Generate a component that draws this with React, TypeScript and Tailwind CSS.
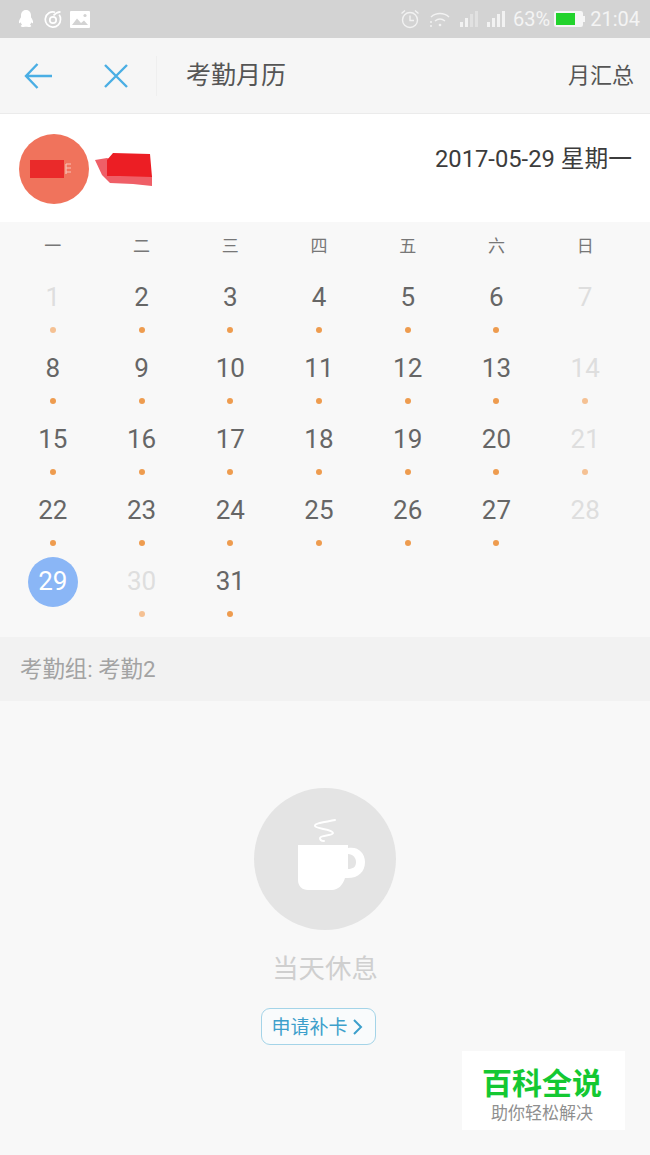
import React from "react";

const days: { n: number; off?: boolean; noDot?: boolean; sel?: boolean }[] = [
  { n: 1, off: true }, { n: 2 }, { n: 3 }, { n: 4 }, { n: 5 }, { n: 6 }, { n: 7, off: true, noDot: true },
  { n: 8 }, { n: 9 }, { n: 10 }, { n: 11 }, { n: 12 }, { n: 13 }, { n: 14, off: true },
  { n: 15 }, { n: 16 }, { n: 17 }, { n: 18 }, { n: 19 }, { n: 20 }, { n: 21, off: true },
  { n: 22 }, { n: 23 }, { n: 24 }, { n: 25 }, { n: 26 }, { n: 27 }, { n: 28, off: true, noDot: true },
  { n: 29, sel: true, noDot: true }, { n: 30, off: true }, { n: 31 },
];

function Bars({ dim }: { dim?: boolean }) {
  return (
    <svg width="21" height="16" viewBox="0 0 21 16" fill="#f2f2f2">
      <rect x="0" y="11" width="3" height="5" />
      <rect x="5" y="7" width="3" height="9" />
      <rect x="10" y="3" width="3" height="13" opacity={dim ? 0.45 : 1} />
      <rect x="15" y="0" width="3" height="16" opacity={dim ? 0.45 : 1} />
    </svg>
  );
}

export default function App() {
  return (
    <div className="w-[650px] h-[1155px] bg-[#f8f8f8] overflow-hidden relative font-['Roboto','Noto_Sans_CJK_SC',sans-serif]">
      {/* status bar */}
      <div className="h-[38px] bg-[#d3d3d3] flex items-center justify-between pl-[18px] pr-[10px] text-[#f4f4f4]">
        <div className="flex items-center">
          <svg width="16" height="18" viewBox="0 0 16 18" fill="#fff">
            <path d="M8 0C4.6 0 3 2.6 3 5.5v1.7C1.6 9.2.6 11 1 13c.3.6 1 .3 1.6-.7.3 1 .8 1.8 1.4 2.4-1 .5-1.4 1-1.2 1.6.3.9 2.7 1 4.1.5.6-.2 1.6-.2 2.2 0 1.4.5 3.8.4 4.1-.5.2-.6-.2-1.1-1.2-1.6.6-.6 1.1-1.4 1.4-2.4.6 1 1.3 1.3 1.6.7.4-2-.6-3.8-2-5.8V5.5C13 2.6 11.4 0 8 0z" />
          </svg>
          <svg width="18" height="18" viewBox="0 0 18 18" fill="none" stroke="#fff" strokeWidth="1.7" className="ml-[10px]">
            <path d="M11 2.2A7.6 7.6 0 1 0 16.5 9c0-1.6-.5-3-1.3-4.2" />
            <circle cx="9" cy="10" r="3.2" />
            <path d="M9.5 5.5C11 3.5 13.5 2 16.5 1.8" />
          </svg>
          <svg width="20" height="17" viewBox="0 0 20 17" className="ml-[8px]">
            <rect width="20" height="17" rx="1" fill="#fff" />
            <path d="M2 14 7 7.5l4 4.5 3-2.5 4 4.5z" fill="#d3d3d3" />
            <circle cx="15" cy="4.5" r="1.6" fill="#d3d3d3" />
          </svg>
        </div>
        <div className="flex items-center text-[20px] leading-none">
          <svg width="20" height="20" viewBox="0 0 20 20" fill="none" stroke="#f2f2f2" strokeWidth="1.4" className="mr-[9px]">
            <circle cx="10" cy="11" r="7.5" />
            <path d="M10 6.5V11.5H14M1.5 4.5 5 1.5M18.5 4.5 15 1.5" />
          </svg>
          <svg width="22" height="17" viewBox="0 0 22 17" fill="none" stroke="#f2f2f2" strokeWidth="1.4" className="mr-[9px]">
            <path d="M2 6c5-4.6 13-4.6 18 0M6 10c3-2.4 7-2.4 10 0" />
            <circle cx="11" cy="14" r="1.3" fill="#f2f2f2" stroke="none" />
            <circle cx="2" cy="11" r="1" fill="#f2f2f2" stroke="none" />
            <circle cx="2" cy="15" r="1" fill="#f2f2f2" stroke="none" />
          </svg>
          <Bars dim />
          <span className="w-[6px]" />
          <Bars />
          <span className="ml-[5px] mr-[4px] text-[20px]">63%</span>
          <svg width="31" height="16" viewBox="0 0 31 16" className="mr-[5px]">
            <rect x="0.75" y="0.75" width="27.5" height="14.5" rx="1.5" fill="#f6f6f6" stroke="#f6f6f6" strokeWidth="1.5" />
            <rect x="2" y="2" width="19" height="12" fill="#22d32c" />
            <rect x="29" y="5" width="2" height="6" fill="#f6f6f6" />
          </svg>
          <span className="text-[20px]">21:04</span>
        </div>
      </div>

      {/* header */}
      <div className="h-[76px] bg-[#f6f6f6] border-b border-[#ebebeb] flex items-center">
        <svg width="30" height="28" viewBox="0 0 30 28" fill="none" stroke="#4aaee4" strokeWidth="2.4" className="ml-[24px]">
          <path d="M28 14H2M13.5 2 2 14l11.5 12" />
        </svg>
        <svg width="26" height="26" viewBox="0 0 26 26" fill="none" stroke="#4aaee4" strokeWidth="2.4" className="ml-[49px]">
          <path d="M2 2l22 22M24 2 2 24" />
        </svg>
        <div className="w-px h-[40px] bg-[#efefef] ml-[27px]" />
        <div className="ml-[29px] text-[25px] text-[#555]">考勤月历</div>
        <div className="ml-auto mr-[16px] text-[22px] text-[#555]">月汇总</div>
      </div>

      {/* user row */}
      <div className="h-[108px] bg-white flex items-start pl-[19px] pr-[18px]">
        <div className="mt-[20px] w-[70px] h-[70px] rounded-full bg-[#f0735c] flex items-center pl-[10px]">
          <svg width="44" height="20" viewBox="0 0 44 20">
            <rect x="1" y="1" width="34" height="18" fill="#ea2a2a" />
            <path d="M37 5h5M37 9h5M37 13h5M37 5v10" stroke="#f7c4b8" strokeWidth="1.2" fill="none" />
          </svg>
        </div>
        <svg width="58" height="36" viewBox="0 0 58 36" className="mt-[38px] ml-[6px]">
          <path d="M0 8 12 6l45 18v10l-19-2-23-1-8-8z" fill="#ef5f67" />
          <path d="M12 8l6-7 37 1 2 23-32-1-13 0z" fill="#ec1e24" />
        </svg>
        <div className="ml-auto mt-[30px] text-[23.75px] leading-[30px] text-[#3c3c3c]">2017-05-29 星期一</div>
      </div>

      {/* calendar */}
      <div className="w-[621px] ml-[8.5px] pb-[20px]">
        <div className="grid grid-cols-7 h-[40px] items-center pt-[10px] text-[17px] text-[#777] text-center">
          {["一", "二", "三", "四", "五", "六", "日"].map((w) => (
            <div key={w}>{w}</div>
          ))}
        </div>
        <div className="grid grid-cols-7">
          {days.map((d) => (
            <div key={d.n} className="h-[71px] flex flex-col items-center pt-[11px]">
              <div
                className={`w-[50px] h-[50px] rounded-full flex items-center justify-center pb-[2px] text-[26px] leading-none ${
                  d.sel ? "bg-[#8ab6f6] text-white" : d.off ? "text-[#dedede]" : "text-[#666]"
                }`}
              >
                {d.n}
              </div>
              {!d.noDot && (
                <div className={`mt-[3.5px] w-[6px] h-[6px] rounded-full ${d.off ? "bg-[#f5c193]" : "bg-[#ee9c4f]"}`} />
              )}
            </div>
          ))}
        </div>
      </div>

      {/* group */}
      <div className="h-[64px] bg-[#f2f2f2] flex items-center pl-[20px] pt-[1px] text-[22.4px] text-[#a3a3a3]">考勤组: 考勤2</div>

      {/* rest state */}
      <div className="flex flex-col items-center pt-[87px]">
        <svg width="142" height="142" viewBox="0 0 142 142" fill="none">
          <circle cx="71" cy="71" r="71" fill="#e4e4e4" />
          <path d="M81 32C72 34 60 35 61 38C62 41 79 41 79 45C79 48 66 47 66 50C66 52 68 53 70 53" stroke="#fff" strokeWidth="2" strokeLinecap="round" />
          <path d="M44 57H94V60C104 58 111 65 111 74C111 84 104 91 91 90C89 97 84 102 78 102H54C48 102 44 98 44 92Z" fill="#fff" />
          <path d="M94 66C99 66 102 70 102 74C102 79 99 81 94 81Z" fill="#e4e4e4" />
        </svg>
        <div className="mt-[21px] text-[26.4px] leading-[36px] text-[#cfcfcf]">当天休息</div>
        <div className="mt-[21px] mr-[14px] w-[115px] h-[37px] rounded-[9px] border-[1.5px] border-[#a4d4e8] flex items-center pl-[10px] pt-[3px] text-[19px] text-[#3d9fcb] bg-[#f9fbfc]">
          申请补卡
          <svg width="11" height="18" viewBox="0 0 11 18" fill="none" stroke="#3d9fcb" strokeWidth="2" className="ml-[4px] -mt-[3px]">
            <path d="M2 2l7 7-7 7" />
          </svg>
        </div>
      </div>

      {/* watermark */}
      <div className="absolute left-[462px] top-[1051px] w-[163px] h-[79px] bg-white flex flex-col items-center pr-[3px]">
        <div className="mt-[15px] text-[30px] leading-[36px] font-bold text-[#14c832]">百科全说</div>
        <div className="text-[17px] leading-[22px] text-[#8f8f8f]">助你轻松解决</div>
      </div>
    </div>
  );
}
